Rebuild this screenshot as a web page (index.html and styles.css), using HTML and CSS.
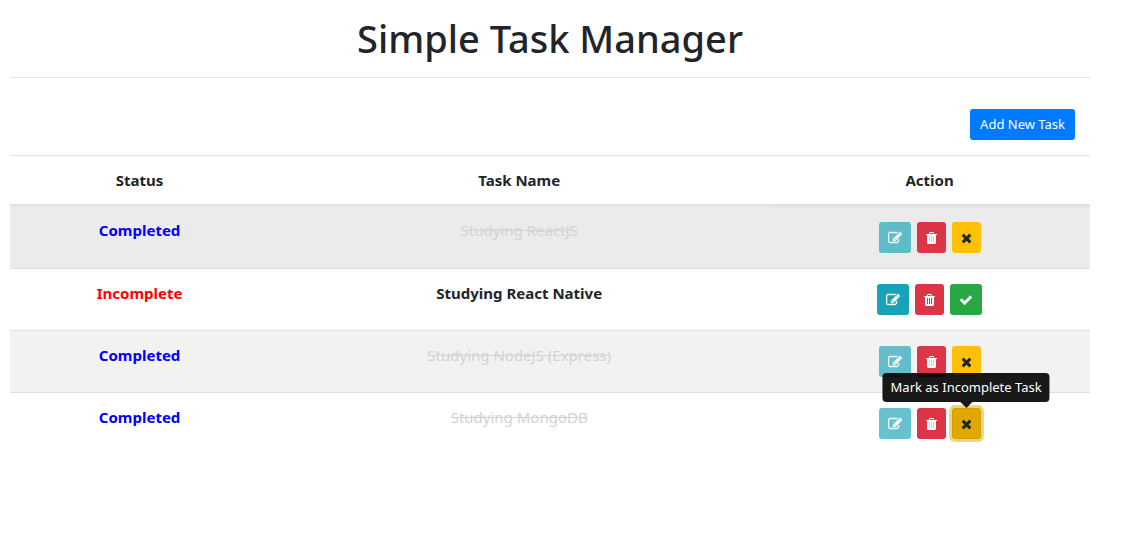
FILE: index.html
```html
<!DOCTYPE html>
<html lang="en">
<head>
<meta charset="utf-8">
<meta name="viewport" content="width=device-width, initial-scale=1">
<title>Simple Task Manager</title>
<link rel="stylesheet" href="styles.css">
</head>
<body>
<svg class="sprite" aria-hidden="true">
  <symbol id="edit" viewBox="0 0 1792 1792"><path class="bold" d="M888 1184l116-116-152-152-116 116v56h96v96h56zm440-720q-16-16-33 1l-350 350q-17 17-1 33t33-1l350-350q17-17 1-33zm80 594v190q0 119-84.5 203.5t-203.5 84.5h-832q-119 0-203.5-84.5t-84.5-203.5v-832q0-119 84.5-203.5t203.5-84.5h832q63 0 117 25 15 7 18 23 3 17-9 29l-49 49q-14 14-32 8-23-6-45-6h-832q-66 0-113 47t-47 113v832q0 66 47 113t113 47h832q66 0 113-47t47-113v-126q0-13 9-22l64-64q15-15 35-7t20 29zm-96-738l288 288-672 672h-288v-288zm444 132l-92 92-288-288 92-92q28-28 68-28t68 28l152 152q28 28 28 68t-28 68z"/></symbol>
  <symbol id="trash" viewBox="192 0 1408 1792"><path class="bars" d="M520 600h720v840h-720z"/><path d="M704 1376v-704q0-14-9-23t-23-9h-64q-14 0-23 9t-9 23v704q0 14 9 23t23 9h64q14 0 23-9t9-23zm256 0v-704q0-14-9-23t-23-9h-64q-14 0-23 9t-9 23v704q0 14 9 23t23 9h64q14 0 23-9t9-23zm256 0v-704q0-14-9-23t-23-9h-64q-14 0-23 9t-9 23v704q0 14 9 23t23 9h64q14 0 23-9t9-23zm-544-992h448l-48-117q-7-9-17-11h-317q-10 2-17 11zm928 32v64q0 14-9 23t-23 9h-96v948q0 83-47 143.5t-113 60.5h-832q-66 0-113-58.5t-47-141.5v-952h-96q-14 0-23-9t-9-23v-64q0-14 9-23t23-9h309l70-167q15-37 54-63t79-26h320q40 0 79 26t54 63l70 167h309q14 0 23 9t9 23z"/></symbol>
  <symbol id="times" viewBox="192 0 1408 1792"><path d="M1490 1322q0 40-28 68l-136 136q-28 28-68 28t-68-28l-294-294-294 294q-28 28-68 28t-68-28l-136-136q-28-28-28-68t28-68l294-294-294-294q-28-28-28-68t28-68l136-136q28-28 68-28t68 28l294 294 294-294q28-28 68-28t68 28l136 136q28 28 28 68t-28 68l-294 294 294 294q28 28 28 68z"/></symbol>
  <symbol id="check" viewBox="0 0 1792 1792"><path d="M1671 566q0 40-28 68l-724 724-136 136q-28 28-68 28t-68-28l-136-136-362-362q-28-28-28-68t28-68l136-136q28-28 68-28t68 28l294 295 656-657q28-28 68-28t68 28l136 136q28 28 28 68z"/></symbol>
</svg>
<main class="page">
  <h1 class="title">Simple Task Manager</h1>
  <div class="toolbar"><button type="button" class="btn btn-primary">Add New Task</button></div>
  <table class="tasks">
    <colgroup><col class="col-status"><col class="col-name"><col class="col-action"></colgroup>
    <thead><tr><th scope="col">Status</th><th scope="col">Task Name</th><th scope="col">Action</th></tr></thead>
    <tbody>
      <tr class="hovered">
        <td class="completed">Completed</td>
        <td class="done">Studying ReactJS</td>
        <td class="action"><div class="buttons">
          <button type="button" class="btn btn-info" aria-label="Edit Task" disabled><svg class="icon wide"><use href="#edit"/></svg></button>
          <button type="button" class="btn btn-danger" aria-label="Delete Task"><svg class="icon warm"><use href="#trash"/></svg></button>
          <button type="button" class="btn btn-warning" aria-label="Mark as Incomplete Task"><svg class="icon"><use href="#times"/></svg></button>
        </div></td>
      </tr>
      <tr>
        <td class="incomplete">Incomplete</td>
        <td class="open">Studying React Native</td>
        <td class="action"><div class="buttons">
          <button type="button" class="btn btn-info" aria-label="Edit Task"><svg class="icon wide"><use href="#edit"/></svg></button>
          <button type="button" class="btn btn-danger" aria-label="Delete Task"><svg class="icon"><use href="#trash"/></svg></button>
          <button type="button" class="btn btn-success" aria-label="Mark as Completed Task"><svg class="icon wide"><use href="#check"/></svg></button>
        </div></td>
      </tr>
      <tr class="striped">
        <td class="completed">Completed</td>
        <td class="done">Studying NodeJS (Express)</td>
        <td class="action"><div class="buttons">
          <button type="button" class="btn btn-info" aria-label="Edit Task" disabled><svg class="icon wide"><use href="#edit"/></svg></button>
          <button type="button" class="btn btn-danger" aria-label="Delete Task"><svg class="icon warm"><use href="#trash"/></svg></button>
          <button type="button" class="btn btn-warning" aria-label="Mark as Incomplete Task"><svg class="icon"><use href="#times"/></svg></button>
        </div></td>
      </tr>
      <tr>
        <td class="completed">Completed</td>
        <td class="done">Studying MongoDB</td>
        <td class="action"><div class="buttons">
          <button type="button" class="btn btn-info" aria-label="Edit Task" disabled><svg class="icon wide"><use href="#edit"/></svg></button>
          <button type="button" class="btn btn-danger" aria-label="Delete Task"><svg class="icon warm"><use href="#trash"/></svg></button>
          <span class="tip-anchor">
            <button type="button" class="btn btn-warning active" aria-describedby="tip"><svg class="icon"><use href="#times"/></svg></button>
            <span class="tooltip" role="tooltip" id="tip">Mark as Incomplete Task</span>
          </span>
        </div></td>
      </tr>
    </tbody>
  </table>
</main>
</body>
</html>
```

FILE: styles.css
```css
*,
*::before,
*::after {
  box-sizing: border-box;
}

body {
  margin: 0;
  background: #fff;
  color: #212529;
  font: 15px/24px "Segoe UI", "Noto Sans", sans-serif;
}

.sprite {
  position: absolute;
  width: 0;
  height: 0;
}

.page {
  margin: 0 48px 0 10px;
  padding-top: 14px;
}

.title {
  margin: 0;
  padding-bottom: 15px;
  border-bottom: 1px solid #e5e5e5;
  font-size: 38px;
  line-height: 48px;
  font-weight: 500;
  text-align: center;
}

.toolbar {
  display: flex;
  justify-content: flex-end;
  padding: 31px 15px 15px;
}

.btn {
  display: flex;
  align-items: center;
  justify-content: center;
  height: 31px;
  margin: 0;
  padding: 0 8px;
  border: 1px solid transparent;
  border-radius: 3px;
  color: #fff;
  font: inherit;
  font-size: 13px;
  line-height: 21px;
}

.btn-primary {
  padding: 0 9px;
  background: #007bff;
}

.btn-info { background: #17a2b8; }
.btn-danger { background: #dc3545; }
.btn-success { background: #28a745; }
.btn-warning { background: #ffc107; color: #212529; }
.btn:disabled { opacity: 0.65; }

.btn-warning.active {
  background: #e0a800;
  border-color: #d39e00;
  box-shadow: 0 0 0 3px rgba(222, 170, 12, 0.5);
}

.icon {
  display: block;
  width: 11px;
  height: 14px;
  fill: currentColor;
}

.icon.wide { width: 14px; }
.icon.warm { --bars: #f9c6a4; }
.bars { fill: var(--bars, none); }

.bold {
  stroke: currentColor;
  stroke-width: 60;
}

.tasks {
  width: 100%;
  table-layout: fixed;
  border-collapse: separate;
  border-spacing: 0;
  text-align: center;
}

.col-status { width: 24%; }
.col-name { width: 46.3%; }
.col-action { width: 29.7%; }

th {
  padding: 12px;
  border-top: 1px solid #dee2e6;
  border-bottom: 2px solid #dee2e6;
  font-weight: 700;
}

td {
  padding: 12px;
  border-top: 1px solid #dee2e6;
  vertical-align: top;
}

.hovered { background: #ebebeb; }
.hovered td:not(.action) { border-top: 0; }
.striped { background: #f2f2f2; }

.completed,
.incomplete,
.open {
  font-weight: 700;
}

.completed { color: #00f; }
.incomplete { color: #f00; }

.done {
  color: #d3d3d3;
  text-decoration: line-through;
}

.action { padding: 15px 12px; }

.buttons {
  display: flex;
  justify-content: center;
  gap: 6px;
}

.tip-anchor { position: relative; }

.tooltip {
  position: absolute;
  bottom: 37px;
  left: 50%;
  transform: translateX(-50%);
  padding: 4px 8px;
  border-radius: 4px;
  background: rgba(0, 0, 0, 0.9);
  color: #fff;
  font-size: 13px;
  line-height: 21px;
  white-space: nowrap;
}

.tooltip::after {
  content: "";
  position: absolute;
  top: 100%;
  left: 50%;
  margin-left: -6px;
  border: 6px solid transparent;
  border-bottom-width: 0;
  border-top-color: rgba(0, 0, 0, 0.9);
}
```
